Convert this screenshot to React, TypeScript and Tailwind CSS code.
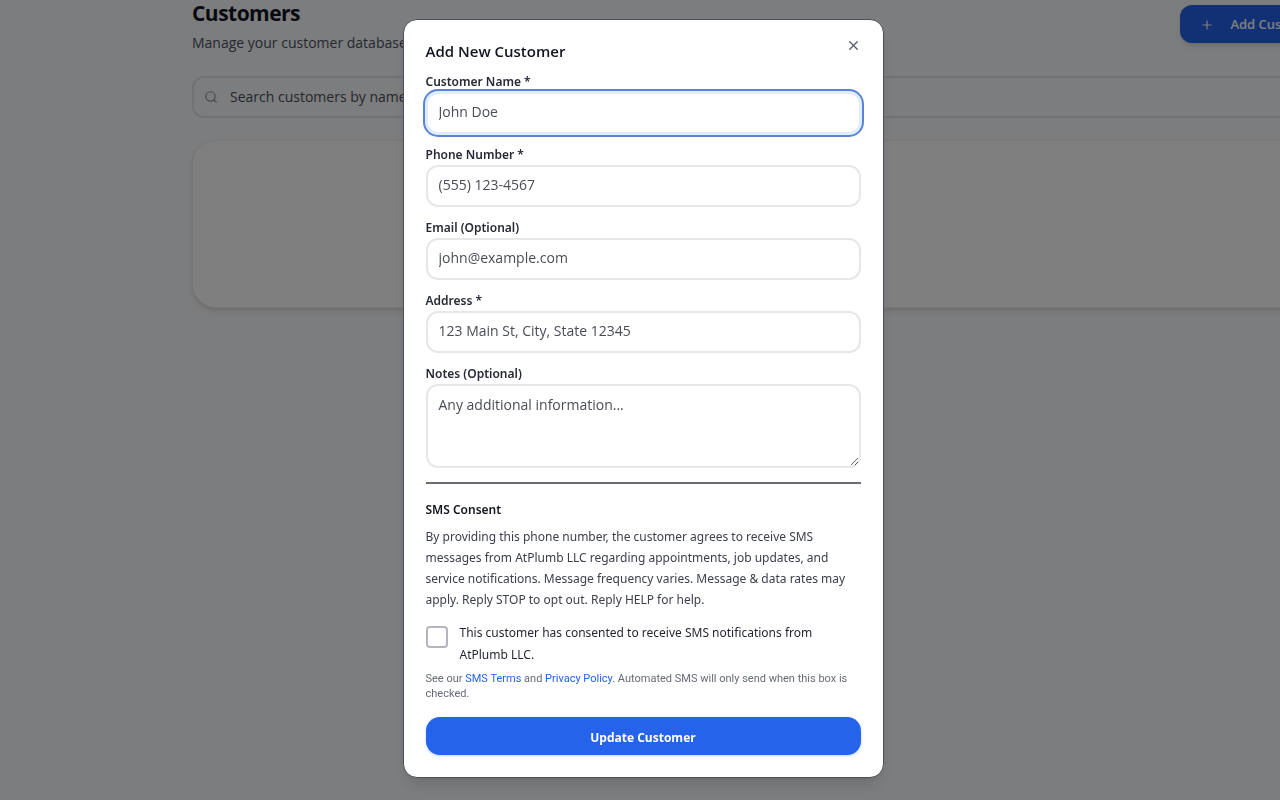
import type { ReactNode } from 'react'
import { Plus, Search, X } from 'lucide-react'

interface FieldProps {
  id: string
  label: string
  children: ReactNode
}

const inputClass =
  'block h-[42px] w-full rounded-xl border-2 bg-white px-[11px] pb-[3px] text-[14px] text-gray-900 placeholder:text-[#4a4d57] outline-none'

const idleClass = 'border-[#e7e7ea]'
const activeClass = 'border-[#e0edfd] shadow-[0_0_0_1px_#e0edfd,0_0_0_3px_#5b84d8]'

export default function App() {
  return (
    <div className="relative min-h-screen overflow-hidden bg-[#f9fafc] font-['Open_Sans','Noto_Sans',sans-serif] text-[#12151f]">
      <CustomersPage />
      <div className="fixed inset-0 flex items-start justify-center overflow-hidden bg-black/50 pt-[19px] pl-1.5">
        <CustomerDialog />
      </div>
    </div>
  )
}

function CustomersPage() {
  return (
    <main className="-mr-15 pl-48">
      <header className="flex items-start justify-between">
        <div>
          <h1 className="text-[21px] leading-[26px] font-bold tracking-tight">Customers</h1>
          <p className="mt-1 text-[14px] leading-[26px] text-[#4a5160]">Manage your customer database</p>
        </div>
        <button
          type="button"
          className="mt-[5px] flex h-[38px] items-center gap-4 rounded-xl bg-[#2563eb] px-5 pt-0.5 text-[13px] font-semibold whitespace-nowrap text-white shadow-md"
        >
          <Plus size={14} strokeWidth={2} />
          Add Customer
        </button>
      </header>

      {/* Search */}
      <div className="mt-5 flex h-[42px] items-center gap-3 rounded-xl border-2 border-[#e2e4e8] px-2.5">
        <Search size={14} strokeWidth={2} className="shrink-0 text-[#8a90a0]" />
        <input
          type="search"
          aria-label="Search customers"
          placeholder="Search customers by name, phone, or email"
          className="w-full bg-transparent pb-0.5 text-[14px] outline-none placeholder:text-[#4a4d57]"
        />
      </div>

      {/* Customer list */}
      <section className="mt-[22px] h-[168px] rounded-3xl border border-[#eceef1] bg-white shadow-md" />
    </main>
  )
}

function CustomerDialog() {
  return (
    <div
      role="dialog"
      aria-modal="true"
      aria-labelledby="dialog-title"
      className="w-full max-w-[481px] rounded-[14px] border border-[#4b4d59] bg-white px-[22px] pt-[19px] pb-[22px] shadow-lg"
    >
      <div className="flex h-6 items-center justify-between">
        <h2 id="dialog-title" className="text-[15px] font-semibold">Add New Customer</h2>
        <button type="button" aria-label="Close" className="-mt-3 text-[#555966]">
          <X size={15} strokeWidth={2} />
        </button>
      </div>

      <form className="mt-[11px]">
        <div className="flex flex-col gap-[13px]">
          <Field id="name" label="Customer Name *">
            <input id="name" type="text" placeholder="John Doe" className={`${inputClass} ${activeClass}`} />
          </Field>
          <Field id="phone" label="Phone Number *">
            <input id="phone" type="tel" placeholder="(555) 123-4567" className={`${inputClass} ${idleClass}`} />
          </Field>
          <Field id="email" label="Email (Optional)">
            <input id="email" type="email" placeholder="john@example.com" className={`${inputClass} ${idleClass}`} />
          </Field>
          <Field id="address" label="Address *">
            <input
              id="address"
              type="text"
              placeholder="123 Main St, City, State 12345"
              className={`${inputClass} ${idleClass}`}
            />
          </Field>
          <Field id="notes" label="Notes (Optional)">
            <textarea
              id="notes"
              placeholder="Any additional information..."
              className="block h-[84px] w-full resize-y rounded-xl border-2 border-[#e7e7ea] bg-white px-[11px] py-2 text-[14px] leading-[22px] outline-none placeholder:text-[#4a4d57]"
            />
          </Field>
        </div>

        {/* SMS consent */}
        <section className="mt-[14px] border-t-2 border-[#6c6b78] pt-[17px] font-['Noto_Sans',sans-serif]">
          <h3 className="text-[12px] leading-[18px] font-semibold">SMS Consent</h3>
          <p className="mt-[7px] text-[12px] leading-[21px] text-[#3c404c]">
            By providing this phone number, the customer agrees to receive SMS messages from AtPlumb LLC regarding
            appointments, job updates, and service notifications. Message frequency varies. Message &amp; data rates
            may apply. Reply STOP to opt out. Reply HELP for help.
          </p>
          <div className="mt-3 flex items-start gap-3">
            <input
              id="consent"
              type="checkbox"
              className="mt-1 size-[22px] shrink-0 appearance-none rounded-sm border-2 border-[#b4b5be] bg-white checked:bg-[#2563eb]"
            />
            <label htmlFor="consent" className="text-[12px] leading-[22px] text-[#1f232e]">
              This customer has consented to receive SMS notifications from AtPlumb LLC.
            </label>
          </div>
          <p className="mt-[5px] font-['Roboto',sans-serif] text-[11px] leading-[15px] text-[#666b78]">
            See our <a href="#sms-terms" className="text-[#2563eb]">SMS Terms</a> and{' '}
            <a href="#privacy" className="text-[#2563eb]">Privacy Policy</a>. Automated SMS will only send when this
            box is checked.
          </p>
        </section>

        <button
          type="submit"
          className="mt-4 h-[38px] w-full rounded-[14px] bg-[#2563eb] pt-[3px] text-[12px] font-bold text-white shadow-sm shadow-blue-200"
        >
          Update Customer
        </button>
      </form>
    </div>
  )
}

function Field({ id, label, children }: FieldProps) {
  return (
    <div>
      <label
        htmlFor={id}
        className="mb-0.5 block font-['Noto_Sans',sans-serif] text-[12px] leading-4 font-semibold text-[#262a35]"
      >
        {label}
      </label>
      {children}
    </div>
  )
}
